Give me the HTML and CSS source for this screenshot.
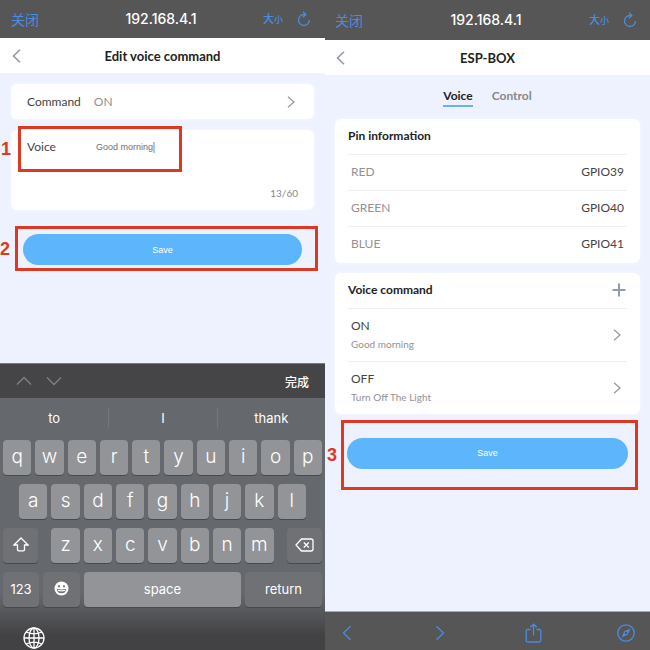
FILE: index.html
```html
<!DOCTYPE html>
<html lang="en">
<head>
<meta charset="utf-8">
<meta name="viewport" content="width=device-width, initial-scale=1">
<title>ESP-BOX voice command</title>
<link rel="stylesheet" href="styles.css">
</head>
<body>
<main class="screens">
  <section class="phone phone-edit">
    <header class="browser-bar">
      <button class="bar-link" lang="zh">关闭</button>
      <span class="address">192.168.4.1</span>
      <span class="bar-tools">
        <button class="text-size" lang="zh">大<small>小</small></button>
        <button class="icon-button" aria-label="Reload"><svg width="14" height="16" viewBox="0 0 14 16"><path d="M8.500 3.500H7A5.500 5.500 0 1 0 12.500 9M6 .800L8.800 3.500L6 6.300"/></svg></button>
      </span>
    </header>
    <nav class="title-bar">
      <button class="icon-button back" aria-label="Back"><svg width="9" height="14" viewBox="0 0 9 14"><path d="M8 .700L1.500 7L8 13.300"/></svg></button>
      <h1>Edit voice command</h1>
    </nav>
    <div class="content">
      <button class="card command-row">
        <span>Command</span><span class="value">ON</span>
        <svg class="chevron" width="8" height="12" viewBox="0 0 8 12"><path d="M1 .800L7 6L1 11.200"/></svg>
      </button>
      <div class="card voice-card">
        <div class="voice-field">
          <label for="voice">Voice</label>
          <div class="entry"><input id="voice" type="text" value="Good morning" maxlength="60" size="10"><i class="caret"></i></div>
        </div>
        <p class="counter">13/60</p>
        <span class="mark mark-voice"><b>1</b></span>
      </div>
      <div class="save-area">
        <button class="save">Save</button>
        <span class="mark mark-save"><b>2</b></span>
      </div>
    </div>
    <div class="keyboard">
      <div class="accessory">
        <button class="icon-button" aria-label="Previous field"><svg width="16" height="10" viewBox="0 0 16 10"><path d="M1 8.500L8 1.500L15 8.500"/></svg></button>
        <button class="icon-button" aria-label="Next field"><svg width="16" height="10" viewBox="0 0 16 10"><path d="M1 1.500L8 8.500L15 1.500"/></svg></button>
        <button class="done" lang="zh">完成</button>
      </div>
      <div class="suggestions"><button>to</button><button>I</button><button>thank</button></div>
      <div class="keys">
        <button class="key">q</button><button class="key">w</button><button class="key">e</button><button class="key">r</button><button class="key">t</button><button class="key">y</button><button class="key">u</button><button class="key">i</button><button class="key">o</button><button class="key">p</button>
        <button class="key second-row">a</button><button class="key">s</button><button class="key">d</button><button class="key">f</button><button class="key">g</button><button class="key">h</button><button class="key">j</button><button class="key">k</button><button class="key">l</button>
        <button class="key dark shift" aria-label="Shift"><svg width="16" height="15" viewBox="0 0 16 15"><path d="M8 1L15 8H11.500V12.500Q11.500 13.800 10.300 13.800H5.700Q4.500 13.800 4.500 12.500V8H1Z"/></svg></button><button class="key">z</button><button class="key">x</button><button class="key">c</button><button class="key">v</button><button class="key">b</button><button class="key">n</button><button class="key">m</button><button class="key dark delete" aria-label="Delete"><svg width="19" height="14" viewBox="0 0 19 14"><path d="M6.500 1H16Q18 1 18 3V11Q18 13 16 13H6.500L1 7ZM8.800 4.500L13.800 9.500M13.800 4.500L8.800 9.500"/></svg></button>
      </div>
      <div class="bottom-keys">
        <button class="key dark">123</button>
        <button class="key dark" aria-label="Emoji"><svg class="emoji" width="15" height="15" viewBox="0 0 15 15"><circle cx="7.500" cy="7.500" r="7"/><ellipse class="hole" cx="5" cy="5.300" rx=".9" ry="1.300"/><ellipse class="hole" cx="10" cy="5.300" rx=".9" ry="1.300"/><path class="hole" d="M2.800 7.800Q7.500 9 12.200 7.800Q11.800 12.300 7.500 12.300Q3.200 12.300 2.800 7.800Z"/><path d="M3.600 8.700Q7.500 9.600 11.400 8.700L10.900 10.100Q7.500 10.900 4.100 10.100Z"/></svg></button>
        <button class="key">space</button>
        <button class="key dark">return</button>
      </div>
      <div class="keyboard-footer">
        <button class="icon-button" aria-label="Switch keyboard"><svg width="22" height="22" viewBox="0 0 22 22"><circle cx="11" cy="11" r="10"/><ellipse cx="11" cy="11" rx="5" ry="10"/><path d="M11 1V21M1 11H21M3.200 5Q11 8.800 18.800 5M3.200 17Q11 13.200 18.800 17"/></svg></button>
      </div>
    </div>
  </section>

  <section class="phone phone-device">
    <header class="browser-bar">
      <button class="bar-link" lang="zh">关闭</button>
      <span class="address">192.168.4.1</span>
      <span class="bar-tools">
        <button class="text-size" lang="zh">大<small>小</small></button>
        <button class="icon-button" aria-label="Reload"><svg width="14" height="16" viewBox="0 0 14 16"><path d="M8.500 3.500H7A5.500 5.500 0 1 0 12.500 9M6 .800L8.800 3.500L6 6.300"/></svg></button>
      </span>
    </header>
    <nav class="title-bar">
      <button class="icon-button back" aria-label="Back"><svg width="9" height="14" viewBox="0 0 9 14"><path d="M8 .700L1.500 7L8 13.300"/></svg></button>
      <h1>ESP-BOX</h1>
    </nav>
    <div class="content">
      <div class="tabs"><a class="active" href="#voice-tab">Voice</a><a href="#control-tab">Control</a></div>
      <section class="card list-card">
        <h2>Pin information</h2>
        <table>
          <tr><th scope="row">RED</th><td>GPIO39</td></tr>
          <tr><th scope="row">GREEN</th><td>GPIO40</td></tr>
          <tr><th scope="row">BLUE</th><td>GPIO41</td></tr>
        </table>
      </section>
      <section class="card list-card">
        <div class="card-head">
          <h2>Voice command</h2>
          <button class="icon-button plus" aria-label="Add voice command"><svg width="14" height="14" viewBox="0 0 14 14"><path d="M7 .500V13.500M.500 7H13.500"/></svg></button>
        </div>
        <button class="command"><span class="name">ON</span><span class="phrase">Good morning</span><svg class="chevron" width="8" height="12" viewBox="0 0 8 12"><path d="M1 .800L7 6L1 11.200"/></svg></button>
        <button class="command"><span class="name">OFF</span><span class="phrase">Turn Off The Light</span><svg class="chevron" width="8" height="12" viewBox="0 0 8 12"><path d="M1 .800L7 6L1 11.200"/></svg></button>
      </section>
      <div class="save-area">
        <button class="save">Save</button>
        <span class="mark mark-save"><b>3</b></span>
      </div>
    </div>
    <footer class="browser-tools">
      <button class="icon-button" aria-label="Previous page"><svg width="10" height="16" viewBox="0 0 10 16"><path d="M8.500 1.200L1.500 8L8.500 14.800"/></svg></button>
      <button class="icon-button" aria-label="Next page"><svg width="10" height="16" viewBox="0 0 10 16"><path d="M1.500 1.200L8.500 8L1.500 14.800"/></svg></button>
      <button class="icon-button" aria-label="Share"><svg width="17" height="20" viewBox="0 0 17 20"><path d="M5.500 6.500H2.800Q1.200 6.500 1.200 8V17.500Q1.200 19 2.800 19H14.200Q15.800 19 15.800 17.500V8Q15.800 6.500 14.200 6.500H11.500M8.500 12.500V1.300M5.300 4.300L8.500 1.200L11.700 4.300"/></svg></button>
      <button class="icon-button" aria-label="Open in browser"><svg width="18" height="18" viewBox="0 0 18 18"><circle cx="9" cy="9" r="8.200"/><path class="needle" d="M13.500 4.500L10.700 10.700L4.500 13.500L7.300 7.300Z"/><circle class="pivot" cx="9" cy="9" r="1.300"/></svg></button>
    </footer>
  </section>
</main>
</body>
</html>
```

FILE: styles.css
```css
* { box-sizing: border-box; }
body { margin: 0; font-family: Lato, "Noto Sans CJK SC", sans-serif; font-size: 12px; line-height: 16px; color: #444; }
button { margin: 0; padding: 0; border: 0; background: none; font: inherit; color: inherit; text-align: inherit; }
h1, h2, p { margin: 0; }
svg { display: block; fill: none; stroke: currentColor; stroke-width: 1.3; }
.icon-button { display: flex; }

.screens { display: grid; grid-template-columns: 1fr 1fr; min-height: 100vh; }
.phone { display: flex; flex-direction: column; min-width: 0; background: #eef2ff; }
.content { flex: 1; padding: 11px; }

.browser-bar { display: grid; grid-template-columns: 1fr auto 1fr; align-items: center; height: 38px; padding: 0 14px 0 11px; background: #565656; color: #4c8be0; }
.phone-device .browser-bar { height: 40px; padding: 0 13px 0 10px; }
.bar-link { font-family: "Noto Sans CJK SC", sans-serif; font-size: 14px; }
.address { font-family: Inter, sans-serif; font-size: 14px; font-weight: 500; color: #fff; }
.bar-tools { display: flex; justify-content: flex-end; align-items: center; gap: 14px; }
.text-size { font-family: "Noto Sans CJK SC", sans-serif; font-size: 11px; font-weight: 500; }
.text-size small { font-size: 9px; }

.title-bar { display: grid; grid-template-columns: 1fr auto 1fr; align-items: center; height: 35px; padding: 0 12px; background: #fff; }
.title-bar h1 { font-size: 13px; font-weight: 700; color: #222; }
.phone-device .title-bar { padding: 0 11px; }
.back { color: #9299a8; }
.back svg { stroke-width: 1.6; }

.card { background: #fff; border-radius: 6px; box-shadow: 0 0 5px #f6f9ff; }
.chevron { color: #979eac; stroke-width: 1.4; }
.command-row { display: flex; align-items: center; width: 100%; height: 35px; padding: 0 19px 0 16px; }
.command-row .value { margin-left: 13px; color: #929292; }
.command-row .chevron { margin-left: auto; }
.voice-card { position: relative; margin-top: 11px; height: 80px; padding: 9px 16px; display: flex; flex-direction: column; justify-content: space-between; }
.voice-field { display: grid; grid-template-columns: 69px 1fr; align-items: center; }
.entry { display: flex; align-items: center; min-width: 0; }
.entry input { width: 57px; padding: 0; border: 0; outline: 0; background: none; font: 9px "Liberation Sans", sans-serif; color: #707070; }
.caret { width: 2px; height: 11px; background: #a6c7f6; }
.counter { text-align: right; font-size: 10px; color: #898989; }

.save-area { position: relative; margin: 24px 12px 0; }
.save { display: block; width: 100%; height: 31px; border-radius: 16px; background: #5db6fb; color: #fff; font: 9px "Liberation Sans", sans-serif; text-align: center; }
.mark { position: absolute; border: 3px solid #dd3824; color: #dd3824; pointer-events: none; }
.mark b { position: absolute; left: -20px; top: 50%; font: bold 18px/20px "Liberation Sans", sans-serif; transform: translateY(-50%); }
.mark-voice { left: 7px; top: -4px; width: 164px; height: 46px; }
.mark-save { inset: -8px -16px -6px -8px; }
.mark-save b { left: -18px; }

.keyboard { background: linear-gradient(#65686c 80%, #5c5e61 84%, #424244 95%); color: #fff; border-top: 1px solid #77797c; font-family: Inter, sans-serif; }
.accessory { display: flex; align-items: center; gap: 14px; height: 34px; padding: 0 16px; background: #454547; color: #828284; }
.done { margin-left: auto; color: #fff; font: 500 12px "Noto Sans CJK SC", sans-serif; }
.suggestions { display: grid; grid-template-columns: repeat(3, 1fr); height: 42px; padding: 10px 0 12px; font-size: 13px; }
.suggestions button { text-align: center; }
.suggestions button + button { border-left: 1px solid #74777b; }
.keys { display: grid; grid-template-columns: repeat(20, 1fr); row-gap: 9px; padding: 0 1px; }
.key { grid-column: span 2; display: flex; align-items: center; justify-content: center; min-width: 0; height: 35px; margin: 0 2px; padding-bottom: 2px; border-radius: 4px; background: #929498; box-shadow: 0 1px 0 #47494b; font-size: 19px; font-weight: 300; }
.key.dark { background: #6f7175; }
.second-row { grid-column: 2 / span 2; }
.shift { grid-column: span 3; margin-right: 11px; }
.delete { grid-column: span 3; margin-left: 11px; }
.bottom-keys { display: grid; grid-template-columns: 40fr 41fr 161fr 81fr; padding: 9px 1px 0; }
.bottom-keys .key { grid-column: auto; font-size: 13px; font-weight: 400; }
.emoji { fill: #fff; stroke: none; }
.emoji .hole { fill: #6f7175; }
.keyboard-footer { height: 43px; padding: 20px 23px 0; }

.phone-device .content { padding: 0 10px; }
.tabs { display: flex; justify-content: center; gap: 19px; height: 44px; padding-top: 12px; font-weight: 700; color: #888; }
.tabs a { height: 20px; line-height: 18px; color: inherit; text-decoration: none; }
.tabs .active { color: #222; border-bottom: 2px solid #65b5f2; }
.list-card { padding: 0 13px; }
.list-card + .list-card { margin-top: 10px; }
.list-card h2 { height: 35px; font-size: 12px; line-height: 34px; color: #222; }
.list-card table { width: 100%; border-collapse: collapse; }
.list-card tr { height: 36px; border-top: 1px solid #efefef; }
.list-card th { padding: 0 3px 2px; text-align: left; font-weight: 400; color: #929292; }
.list-card td { padding: 0 3px 2px; text-align: right; }
.card-head { display: flex; justify-content: space-between; align-items: center; }
.plus { color: #929bad; margin-right: 1px; }
.plus svg { stroke-width: 2; }
.command { display: grid; grid-template-columns: 1fr auto; align-items: center; width: 100%; height: 53px; padding: 9px 6px 8px 3px; border-top: 1px solid #efefef; }
.command .name { grid-row: 1; }
.command .phrase { grid-row: 2; font-size: 10px; color: #929292; }
.command .chevron { grid-column: 2; grid-row: 1 / 3; }
.phone-device .mark-save { inset: -18px -10px -21px -6px; }
.phone-device .mark-save b { left: -17px; }

.browser-tools { display: flex; align-items: center; justify-content: space-between; height: 39px; padding: 4px 15px 0 13px; border-top: 1px solid #aaa; background: #565656; color: #4c8be0; }
.browser-tools .icon-button { width: 18px; justify-content: center; }
.needle { fill: currentColor; stroke: none; }
.pivot { fill: #565656; stroke: none; }
```
